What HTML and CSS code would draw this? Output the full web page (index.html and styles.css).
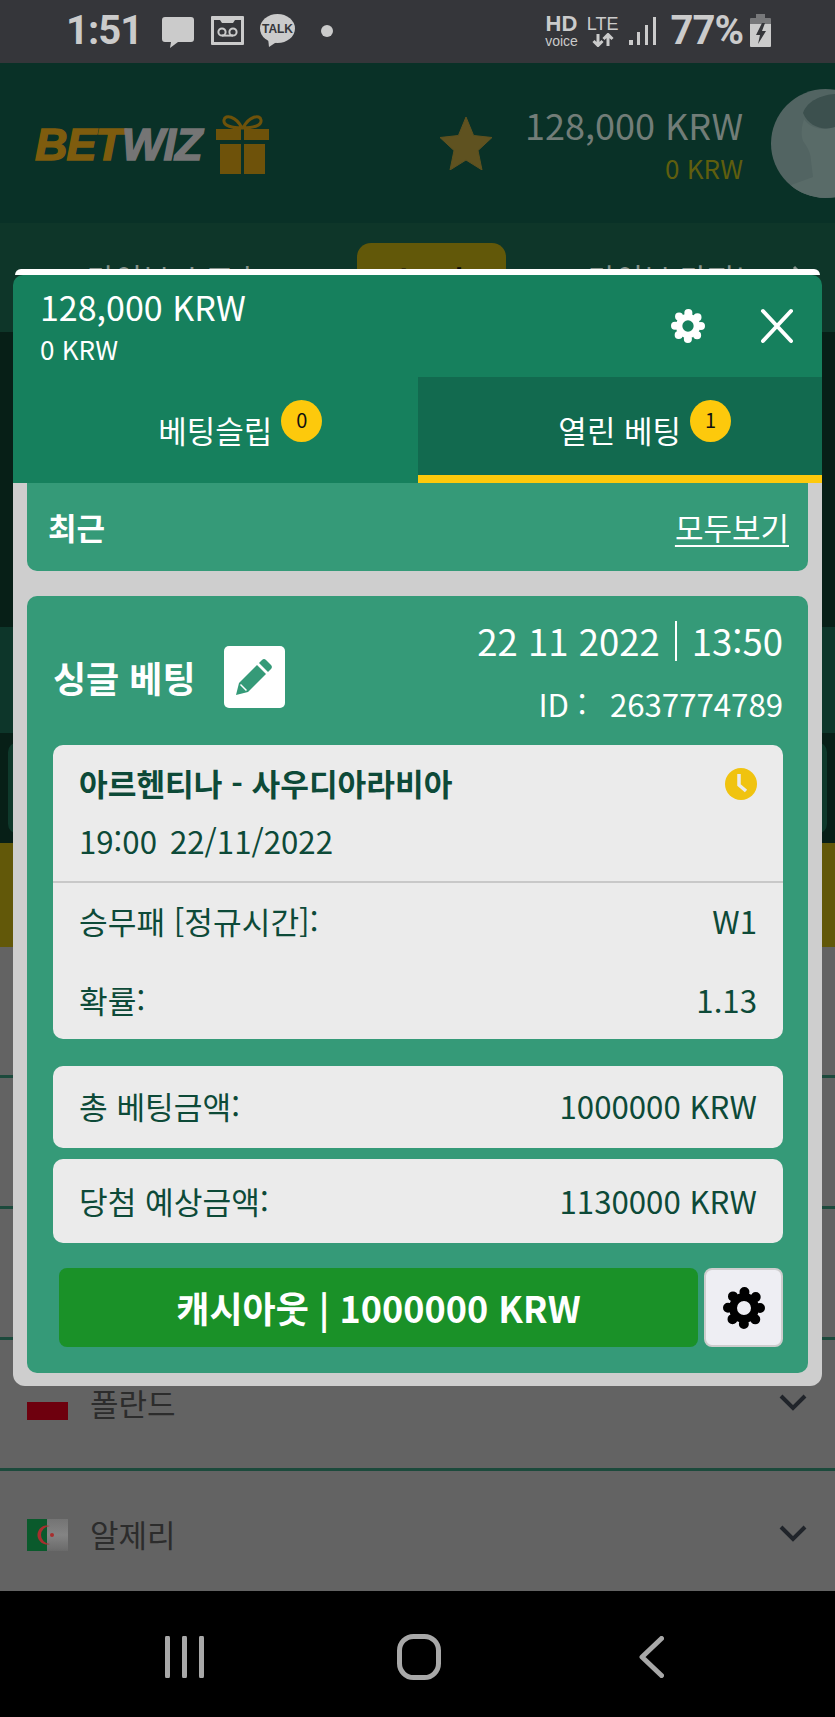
FILE: index.html
```html
<!DOCTYPE html>
<html lang="ko">
<head>
    <meta charset="UTF-8">
    <meta name="viewport" content="width=device-width, initial-scale=1.0">
    <title>BETWIZ</title>
    <link rel="stylesheet" href="styles.css">
</head>
<body>
    <svg class="defs" width="0" height="0">
        <symbol id="cog" viewBox="-21 -21 42 42">
            <circle r="11" fill="none" stroke="currentColor" stroke-width="8"/>
            <circle r="16" fill="none" stroke="currentColor" stroke-width="10" stroke-linecap="round" stroke-dasharray="0 12.566"/>
        </symbol>
    </svg>

    <div class="status">
        <span class="status-text">1:51</span>
        <svg class="icon-msg" width="32" height="31" viewBox="0 0 32 31"><path d="M3 0h26a3 3 0 0 1 3 3v19a3 3 0 0 1-3 3H16l-8 6 1-6H3a3 3 0 0 1-3-3V3a3 3 0 0 1 3-3z" fill="#cbcbcb"/></svg>
        <svg class="icon-vm" width="33" height="29" viewBox="0 0 33 29"><path d="M1 0h31a1 1 0 0 1 1 1v27a1 1 0 0 1-1 1H1a1 1 0 0 1-1-1V1a1 1 0 0 1 1-1z" fill="#cbcbcb"/><path d="M3 4h6l2 3h11l2-3h6v22H3z" fill="#35363a"/><circle cx="11" cy="16" r="3.6" fill="none" stroke="#cbcbcb" stroke-width="2"/><circle cx="22" cy="16" r="3.6" fill="none" stroke="#cbcbcb" stroke-width="2"/><path d="M11 19.6h11" stroke="#cbcbcb" stroke-width="2"/></svg>
        <svg class="icon-talk" width="35" height="33" viewBox="0 0 35 33"><ellipse cx="17.5" cy="14.5" rx="17.5" ry="14.5" fill="#cbcbcb"/><path d="M8 24l1 9 9-6z" fill="#cbcbcb"/><text x="17.5" y="19" text-anchor="middle" class="talk-label">TALK</text></svg>
        <span class="status-dot"></span>

        <div class="status-right">
            <div class="net-hd"><b>HD</b><span>voice</span></div>
            <div class="net-lte">
                <b>LTE</b>
                <svg width="24" height="14" viewBox="0 0 24 14"><path d="M7 1v11M2.5 8L7 12.5 11.500 8M17 13V2M12.500 6L17 1.500 21.500 6" fill="none" stroke="#cbcbcb" stroke-width="3"/></svg>
            </div>
            <svg class="icon-signal" width="27" height="28" viewBox="0 0 27 28"><path d="M0 23h4v5H0zM8 15h3v13H8zM16 8h3v20h-3zM24 0h3v28h-3z" fill="#cbcbcb"/></svg>
            <span class="status-text">77%</span>
            <svg class="icon-batt" width="21" height="33" viewBox="0 0 21 33"><path d="M6 0h9v4H6z" fill="#77787a"/><path d="M1 4h19a1 1 0 0 1 1 1v5H0V5a1 1 0 0 1 1-1z" fill="#77787a"/><path d="M0 10h21v22a1 1 0 0 1-1 1H1a1 1 0 0 1-1-1z" fill="#cbcbcb"/><path d="M12 9l-6 12h4l-2 9 8-13h-4l3-8z" fill="#35363a"/></svg>
        </div>
    </div>

    <header class="topbar">
        <div class="logo"><span class="logo-bet">BET</span><span class="logo-wiz">WIZ</span></div>
        <svg class="gift" width="53" height="59" viewBox="0 0 53 59">
            <path d="M26 13C20 1 9-1 8 5s9 8 18 8zM27 13C33 1 44-1 45 5s-9 8-18 8z" fill="none" stroke="#6e520a" stroke-width="3"/>
            <path d="M0 14h25v11H0zM28 14h25v11H28zM4 29h21v30H4zM28 29h21v30H28z" fill="#6e520a"/>
        </svg>
        <svg class="star" width="52" height="53" viewBox="0 0 52 53"><path d="M26 0l7.600 18.500L52 20.500 38 33.500 42 53 26 43 10 53l4-19.500L0 20.500l18.400-2z" fill="#5f5220" stroke="#5f5220" stroke-width="1" stroke-linejoin="round"/></svg>
        <div class="wallet">
            <div class="wallet-main">128,000 KRW</div>
            <div class="wallet-bonus">0 KRW</div>
        </div>
        <svg class="avatar" width="64" height="109" viewBox="0 0 64 109">
            <defs><clipPath id="avatar-clip"><circle cx="54.500" cy="54.500" r="54.500"/></clipPath></defs>
            <g clip-path="url(#avatar-clip)">
                <rect width="64" height="109" fill="#526462"/>
                <path d="M33 30C30 40 30 46 32 52c6 8 8 14 8 20l2 16-22 8 10 13h34V38C52 42 40 40 33 30z" fill="#596b68"/>
                <path d="M32 24C36 12 50 6 64 5v33C52 42 38 38 32 24z" fill="#3c504e"/>
            </g>
        </svg>
    </header>

    <nav class="mainnav">
        <span class="nav-item nav-left">라이브 스포츠</span>
        <span class="nav-pill">스포츠</span>
        <span class="nav-item nav-right">라이브 카지노</span>
        <svg class="nav-chev" width="14" height="24" viewBox="0 0 14 24"><path d="M2 2l10 10L2 22" fill="none" stroke="#87938c" stroke-width="3"/></svg>
    </nav>

    <div class="band band-dark"></div>
    <div class="band band-green"></div>
    <div class="band band-box"><div class="band-box-inner"></div></div>
    <div class="band band-yellow"></div>

    <div class="countries">
        <div class="country"></div>
        <div class="country"></div>
        <div class="country"></div>
        <div class="country">
            <div class="flag flag-pl"></div>
            <span class="country-name">폴란드</span>
            <svg class="chev" width="28" height="17" viewBox="0 0 28 17"><path d="M2 2l12 12L26 2" fill="none" stroke="#20242a" stroke-width="4"/></svg>
        </div>
        <div class="country">
            <svg class="flag" width="41" height="32" viewBox="0 0 41 32">
                <defs><linearGradient id="dz" x1="0" y1="0" x2="0" y2="1"><stop offset="0" stop-color="#747474"/><stop offset="0.5" stop-color="#848484"/><stop offset="1" stop-color="#6a6a6a"/></linearGradient></defs>
                <rect width="41" height="32" fill="url(#dz)"/>
                <rect width="20" height="32" fill="#0a5a2c"/>
                <path d="M23 7a9.500 9.500 0 1 0 0 18 7.500 7.500 0 1 1 0-18z" fill="#a82e2e"/>
                <circle cx="25" cy="16" r="2" fill="#a82e2e"/>
            </svg>
            <span class="country-name">알제리</span>
            <svg class="chev" width="28" height="17" viewBox="0 0 28 17"><path d="M2 2l12 12L26 2" fill="none" stroke="#20242a" stroke-width="4"/></svg>
        </div>
    </div>

    <div class="softkeys">
        <svg width="39" height="42" viewBox="0 0 39 42"><path d="M2.500 2v38M19.500 2v38M36.500 2v38" stroke="#a8a8a8" stroke-width="5" stroke-linecap="round"/></svg>
        <svg width="44" height="46" viewBox="0 0 44 46"><rect x="2.500" y="2.500" width="39" height="41" rx="14" fill="none" stroke="#a8a8a8" stroke-width="5"/></svg>
        <svg width="25" height="42" viewBox="0 0 25 42"><path d="M22.500 2.500L3 21l19.500 18.500" fill="none" stroke="#a8a8a8" stroke-width="5" stroke-linecap="round" stroke-linejoin="round"/></svg>
    </div>

    <div class="modal">
        <div class="modal-lip"></div>
        <div class="modal-head">
            <div class="modal-wallet">
                <div class="modal-main">128,000 KRW</div>
                <div class="modal-bonus">0 KRW</div>
            </div>
            <svg class="modal-cog" width="34" height="34"><use href="#cog"/></svg>
            <svg class="modal-close" width="34" height="36" viewBox="0 0 34 36"><path d="M3 3l28 30M31 3L3 33" fill="none" stroke="#fff" stroke-width="4" stroke-linecap="round"/></svg>
        </div>
        <div class="tabs">
            <div class="tab"><span class="tab-label">베팅슬립<b class="badge">0</b></span></div>
            <div class="tab tab-active"><span class="tab-label">열린 베팅<b class="badge">1</b></span></div>
        </div>
        <div class="modal-body">
            <div class="recent">
                <b>최근</b>
                <span class="recent-all">모두보기</span>
            </div>
            <div class="bet">
                <div class="bet-top">
                    <div class="bet-type">
                        <b>싱글 베팅</b>
                        <div class="edit-btn">
                            <svg width="36" height="36" viewBox="0 0 36 36"><path d="M0 36l3-12L21 6l9 9-18 18z" fill="#359a78"/><path d="M23 4l3-3a3 3 0 0 1 4 0l5 5a3 3 0 0 1 0 4l-3 3z" fill="#359a78"/><path d="M4.500 25.500l6 6" stroke="#fff" stroke-width="1.500"/></svg>
                        </div>
                    </div>
                    <div class="bet-meta">
                        <div class="bet-date"><span>22 11 2022</span><i class="sep"></i><span>13:50</span></div>
                        <div class="bet-id">ID : &nbsp;<span class="bet-num">2637774789</span></div>
                    </div>
                </div>
                <div class="ticket">
                    <div class="ticket-head">
                        <div class="ticket-title">
                            <b>아르헨티나 - 사우디아라비아</b>
                            <svg width="32" height="32" viewBox="0 0 32 32"><circle cx="16" cy="16" r="16" fill="#f0c30f"/><path d="M14 6v11l7 6" fill="none" stroke="#ebebeb" stroke-width="3.500"/></svg>
                        </div>
                        <div class="ticket-time"><span>19:00</span><span>22/11/2022</span></div>
                    </div>
                    <div class="ticket-rows">
                        <div class="row"><span>승무패 [정규시간]:</span><span>W1</span></div>
                        <div class="row"><span>확률:</span><span>1.13</span></div>
                    </div>
                </div>
                <div class="amount amount-first"><span>총 베팅금액:</span><span>1000000 KRW</span></div>
                <div class="amount amount-second"><span>당첨 예상금액:</span><span>1130000 KRW</span></div>
                <div class="actions">
                    <div class="cashout">캐시아웃 | 1000000 KRW</div>
                    <div class="cog-btn"><svg width="42" height="42"><use href="#cog"/></svg></div>
                </div>
            </div>
        </div>
    </div>
</body>
</html>
```

FILE: styles.css
```css
* {
    box-sizing: border-box;
}
body {
    font-family: "Noto Sans CJK KR", "Noto Sans", sans-serif;
    margin: 0;
    width: 835px;
    height: 1717px;
    overflow: hidden;
    position: relative;
    background-color: #636363;
}
.defs {
    display: block;
    height: 0;
}

/* status bar */
.status {
    height: 63px;
    background-color: #35363a;
    display: flex;
    align-items: center;
    padding: 0 64px 2px 66px;
    color: #cbcbcb;
}
.status-text {
    font-family: Roboto, sans-serif;
    font-weight: 700;
    font-size: 40px;
    line-height: 42px;
    letter-spacing: -1px;
}
.icon-msg {
    margin-left: 20px;
    margin-top: 3px;
}
.icon-vm {
    margin-left: 17px;
}
.icon-talk {
    margin-left: 16px;
}
.talk-label {
    font-family: "Liberation Sans", sans-serif;
    font-size: 12px;
    font-weight: 700;
    fill: #35363a;
}
.status-dot {
    width: 12px;
    height: 12px;
    border-radius: 50%;
    background-color: #cbcbcb;
    margin-left: 26px;
}
.status-right {
    margin-left: auto;
    display: flex;
    align-items: center;
}
.net-hd,
.net-lte {
    display: flex;
    flex-direction: column;
    align-items: center;
    font-family: "Liberation Sans", sans-serif;
}
.net-hd b {
    font-size: 22px;
    line-height: 20px;
}
.net-hd span {
    font-size: 14px;
    line-height: 14px;
}
.net-lte {
    margin-left: 9px;
}
.net-lte b {
    font-size: 18px;
    font-weight: 400;
    line-height: 18px;
}
.icon-signal {
    margin-left: 10px;
}
.status-right .status-text {
    margin-left: 15px;
}
.icon-batt {
    margin-left: 7px;
}

/* site header, dimmed by the overlay */
.topbar {
    height: 160px;
    background-color: #093127;
    display: flex;
    align-items: center;
    padding-left: 35px;
}
.topbar > * {
    flex-shrink: 0;
}
.logo {
    font-family: "Liberation Sans", sans-serif;
    font-size: 45px;
    font-weight: 700;
    font-style: italic;
    letter-spacing: -1px;
    line-height: 50px;
    margin-top: 4px;
    -webkit-text-stroke: 1.5px currentColor;
}
.logo-bet {
    color: #7e5c0e;
}
.logo-wiz {
    color: #757575;
}
.gift {
    margin-left: 15px;
    margin-top: 2px;
}
.star {
    margin-left: auto;
}
.wallet {
    width: 251px;
    text-align: right;
    margin-top: 1px;
}
.wallet-main {
    color: #727d78;
    font-size: 36px;
    line-height: 48px;
}
.wallet-bonus {
    color: #5f5e0e;
    font-size: 26px;
    line-height: 40px;
}
.avatar {
    margin-left: 28px;
    margin-top: 1px;
}

.mainnav {
    height: 109px;
    background-color: #0e3629;
    display: flex;
    align-items: flex-start;
}
.nav-item {
    color: #87938c;
    font-size: 30px;
    line-height: 40px;
    margin-top: 34px;
}
.nav-left {
    margin-left: 87px;
    width: 183px;
}
.nav-right {
    margin-left: 82px;
}
.nav-pill {
    margin-top: 20px;
    margin-left: 87px;
    width: 149px;
    height: 80px;
    border-radius: 14px;
    background-color: #625809;
    color: #0a0a0a;
    font-size: 30px;
    font-weight: 700;
    text-align: center;
    padding-top: 14px;
}
.nav-chev {
    margin-top: 42px;
    margin-left: 30px;
}

/* page bands, only their edges show beside the modal */
.band-dark {
    height: 295px;
    background-color: #071f17;
}
.band-green {
    height: 106px;
    background-color: #0d362a;
}
.band-box {
    height: 110px;
    background-color: #071f17;
    padding: 9px 8px;
}
.band-box-inner {
    height: 100%;
    border-radius: 10px;
    background-color: #0e392b;
}
.band-yellow {
    height: 104px;
    background-color: #625809;
}

.countries {
    height: 644px;
    overflow: hidden;
}
.country {
    height: 131px;
    border-bottom: 3px solid #1c4a3c;
    display: flex;
    align-items: center;
    padding: 0 28px 0 27px;
}
.flag {
    width: 41px;
    height: 32px;
    flex-shrink: 0;
}
.flag-pl {
    background: linear-gradient(transparent 44%, #6e000e 44%);
}
.country-name {
    margin-left: 22px;
    margin-bottom: 3px;
    color: #2c2c2c;
    font-size: 31px;
}
.chev {
    margin-left: auto;
    margin-bottom: 3px;
}

.softkeys {
    position: absolute;
    left: 0;
    right: 0;
    bottom: 0;
    height: 126px;
    background-color: #000;
    display: grid;
    grid-template-columns: 185px 284px 181px;
    align-items: center;
    justify-items: center;
    padding: 6px 0 0 92px;
}

/* betting modal */
.modal {
    position: absolute;
    top: 269px;
    left: 13px;
    width: 809px;
    height: 1117px;
    color: #fff;
}
.modal-lip {
    height: 6px;
    margin: 0 2px;
    background-color: #fff;
    border-radius: 6px 6px 0 0;
}
.modal-head {
    height: 102px;
    background-color: #16805d;
    border-radius: 10px 10px 0 0;
    display: flex;
    align-items: center;
    padding: 0 28px 0 27px;
}
.modal-wallet {
    margin-right: auto;
}
.modal-main {
    font-size: 34px;
    line-height: 44px;
}
.modal-bonus {
    font-size: 26px;
    line-height: 36px;
    margin-top: 2px;
}
.modal-cog {
    color: #fff;
    margin-right: 55px;
}
.tabs {
    display: flex;
    height: 106px;
}
.tab {
    flex: 1;
    background-color: #16805d;
    display: flex;
    justify-content: center;
    align-items: flex-start;
    font-size: 31px;
    padding-top: 30px;
    line-height: 46px;
}
.tab-active {
    background-color: #126a4f;
    border-bottom: 8px solid #fdc90c;
}
.tab-label {
    position: relative;
}
.badge {
    position: absolute;
    left: calc(100% + 9px);
    top: -7px;
    width: 41px;
    height: 42px;
    border-radius: 50%;
    background-color: #fdc90c;
    color: #111;
    font-size: 20px;
    font-weight: 400;
    line-height: 40px;
    text-align: center;
}
.modal-body {
    height: 903px;
    background-color: #cecece;
    border-radius: 0 0 12px 12px;
    padding: 0 14px;
}
.recent {
    height: 88px;
    background-color: #359a78;
    border-radius: 0 0 10px 10px;
    display: flex;
    justify-content: space-between;
    align-items: center;
    padding: 0 19px 2px 21px;
    font-size: 31px;
}
.recent-all {
    text-decoration: underline;
    text-underline-offset: 5px;
    text-decoration-thickness: 2px;
}
.bet {
    margin-top: 25px;
    height: 777px;
    background-color: #359a78;
    border-radius: 10px;
    padding: 0 25px 0 26px;
}
.bet-top {
    height: 149px;
    display: flex;
    justify-content: space-between;
}
.bet-type {
    display: flex;
    align-items: center;
    gap: 28px;
    margin-top: 50px;
    height: 62px;
    font-size: 36px;
}
.edit-btn {
    width: 61px;
    height: 62px;
    background-color: #fff;
    border-radius: 5px;
    display: flex;
    justify-content: center;
    align-items: center;
}
.bet-meta {
    text-align: right;
    padding-top: 21px;
}
.bet-date {
    font-size: 36.500px;
    line-height: 48px;
    display: flex;
    align-items: center;
    gap: 15px;
}
.sep {
    width: 2px;
    height: 40px;
    background-color: #fff;
}
.bet-id {
    font-size: 31.200px;
    line-height: 48px;
    margin-top: 15px;
}
.bet-num {
    margin-left: 6px;
}
.ticket,
.amount {
    background-color: #ebebeb;
    border-radius: 10px;
    color: #0d4a38;
    font-size: 31.200px;
    line-height: 40px;
}
.ticket {
    height: 294px;
}
.ticket-head {
    height: 138px;
    padding: 18px 26px 0;
    border-bottom: 2px solid #c8c8c8;
}
.ticket-title {
    display: flex;
    justify-content: space-between;
    align-items: center;
}
.ticket-title svg {
    margin-top: 2px;
}
.ticket-time {
    margin-top: 18px;
    display: flex;
    gap: 13px;
}
.ticket-rows {
    padding: 18px 26px 0;
    display: flex;
    flex-direction: column;
    gap: 39px;
}
.row,
.amount {
    display: flex;
    justify-content: space-between;
}
.amount {
    align-items: center;
    padding: 0 26px;
}
.amount-first {
    margin-top: 27px;
    height: 82px;
    padding-bottom: 2px;
}
.amount-second {
    margin-top: 11px;
    height: 84px;
}
.actions {
    display: flex;
    gap: 6px;
    margin-top: 25px;
    padding-left: 6px;
    height: 79px;
}
.cashout {
    flex: 1;
    background-color: #1a9128;
    border-radius: 8px;
    font-size: 36px;
    font-weight: 700;
    line-height: 79px;
    text-align: center;
}
.cog-btn {
    width: 79px;
    background-color: #eeeef3;
    border: 2px solid #cdcdcd;
    border-radius: 8px;
    display: flex;
    justify-content: center;
    align-items: center;
    color: #000;
}
```
